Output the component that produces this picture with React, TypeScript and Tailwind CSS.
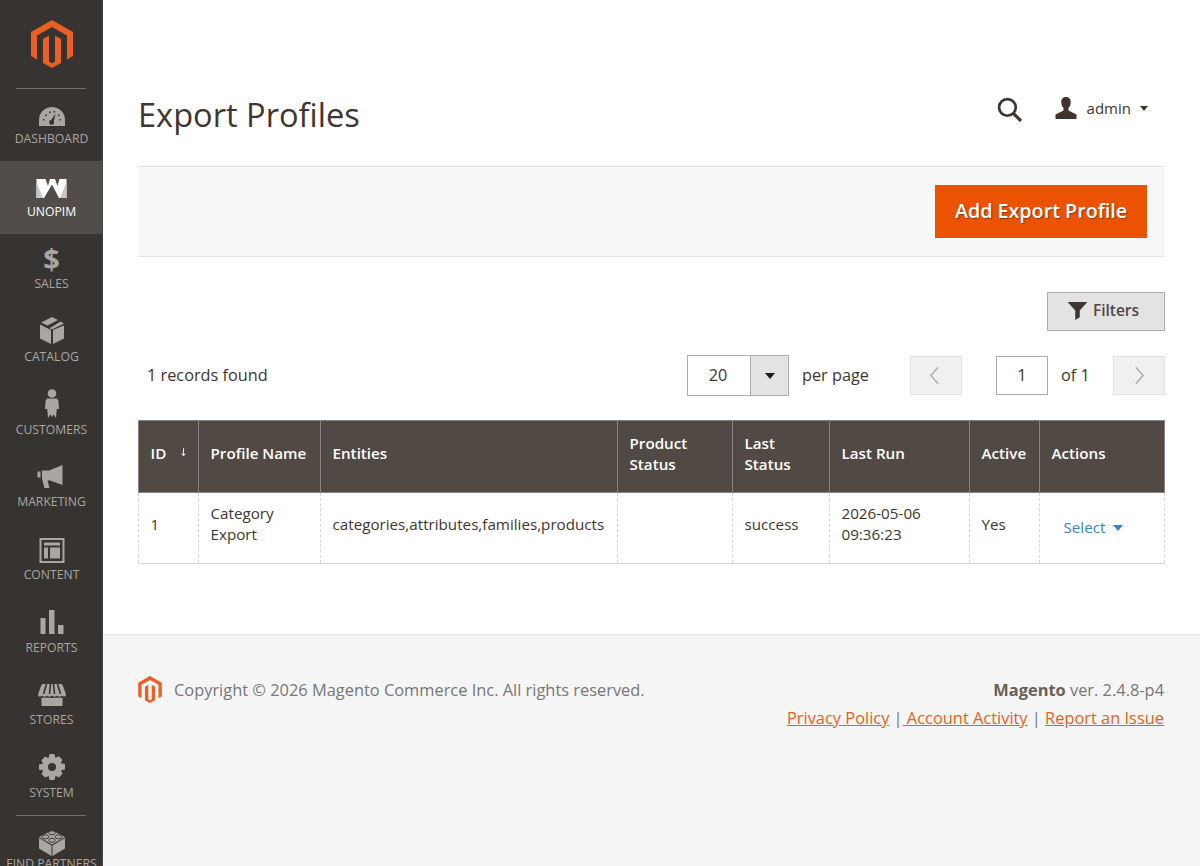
import type { ReactNode } from "react";

const font = { fontFamily: '"Open Sans", "Noto Sans", sans-serif' };

function MagentoLogo({ className }: { className: string }) {
  return (
    <svg viewBox="0 0 42 48" className={className} fill="#eb5f22">
      <path d="M21 0 42 12V36L36 39.5V15.5L21 7 6 15.5V39.5L0 36V12Z" />
      <path d="M21 48 12 43V19L18 15.5V41.5L21 43.5 24 41.5V15.5L30 19V43Z" />
    </svg>
  );
}

const iconFill = "#aaa6a0";

const icons: Record<string, ReactNode> = {
  dashboard: (
    <>
      <path
        fillRule="evenodd"
        fill={iconFill}
        d="M5 31V25a13 13 0 0 1 26 0V31ZM21.5 18.5 17.2 25a2.4 2.4 0 1 0 2.6 1.4Z"
      />
      <path
        fill="#373330"
        d="M9 24h1.6v1.6H9ZM11 19.5h1.6v1.6H11ZM15 16.5h1.6v1.6H15ZM19.5 16h1.6v1.6h-1.6ZM25.5 24h1.6v1.6h-1.6ZM24 19.5h1.6v1.6H24Z"
      />
    </>
  ),
  unopim: (
    <>
      <path
        fill="#ffffff"
        d="M2.500 11H11.500L14 18 16 11H21L23.500 18 25.500 11H32.500V30H25L18 16.500 10 30H2.500Z"
      />
      <path fill="#c9c7c5" d="M2.500 14 9 30H2.500ZM32.500 14 26 30H32.500Z" />
    </>
  ),
  catalog: (
    <>
      <path
        fill={iconFill}
        d="M18 4 24 7 13.500 12.500 7 9.500ZM26.500 8.500 30 10.500 18 16.500 15.500 15.200ZM6 11.500 17 17V31L6 25.500ZM30 12.500V25.500L19 31V17Z"
      />
    </>
  ),
  customers: (
    <>
      <circle cx="18" cy="7.500" r="4.300" fill={iconFill} />
      <path
        fill={iconFill}
        d="M13 12.500h10l1.400 2.200.6 8.300h-2.200l-.8 9-2.400-3.500L18 31l-1.600-2.500-2.400 3.500-.8-9h-2.200l.6-8.300Z"
      />
    </>
  ),
  marketing: (
    <>
      <path
        fill={iconFill}
        d="M28.500 7V27L16 22.500H13.500L15.500 30H10.500L8 20.500V12.500H15ZM3.500 13.500H6.500V19.500H3.500Z"
      />
    </>
  ),
  content: (
    <>
      <path
        fillRule="evenodd"
        fill={iconFill}
        d="M5.500 7H30.500V32H5.500ZM7.500 9V30H28.500V9ZM10 11.500H26V14.500H10ZM10 16.500H14V27.500H10ZM16 16.500H26V27.500H16Z"
      />
    </>
  ),
  reports: (
    <>
      <path fill={iconFill} d="M6.500 14H11.500V30H6.500ZM15 6H20.500V30H15ZM24 21H29.500V30H24Z" />
    </>
  ),
  stores: (
    <>
      <path
        fill={iconFill}
        d="M9.500 8H26.500C28 8 28.500 9 29 10L32 18.500C32 21 29 21 28 19.500 27 21 24 21 23 19.500 22 21 19 21 18 19.500 17 21 14 21 13 19.500 12 21 9 21 8 19.500 7 21 4 21 4 18.500L7 10C7.500 9 8 8 9.500 8ZM7.500 21.500C8 21.800 10 22 13 21.500 15 22 21 22 23 21.500 26 22 28 21.800 28.500 21.500V30H7.500Z"
      />
      <path
        stroke="#373330"
        strokeWidth="1.600"
        d="M12.500 8 9.500 18M16.500 8 15.500 18M19.500 8 20.500 18M23.500 8 26.500 18"
      />
    </>
  ),
  system: (
    <>
      <path
        fillRule="evenodd"
        fill={iconFill}
        d="M15.500 5H20.500L21.300 8.800 24.800 7.300 28.400 10.800 26.700 14.200 31 15V20.500L27 21.300 28.600 24.800 25 28.400 21.500 26.700 20.500 31H15.500L14.700 27 11.200 28.600 7.500 25 9.200 21.500 5 20.500V15.500L9 14.700 7.400 11.200 11 7.500 14.500 9.200ZM18 14A4 4 0 1 0 18 22 4 4 0 0 0 18 14Z"
      />
    </>
  ),
};

const menu = [
  { label: "Dashboard", icon: "dashboard" },
  { label: "Unopim", icon: "unopim", active: true },
  { label: "Sales", icon: "sales" },
  { label: "Catalog", icon: "catalog" },
  { label: "Customers", icon: "customers" },
  { label: "Marketing", icon: "marketing" },
  { label: "Content", icon: "content" },
  { label: "Reports", icon: "reports" },
  { label: "Stores", icon: "stores" },
  { label: "System", icon: "system" },
];

function Sidebar() {
  return (
    <aside className="w-[103px] h-[866px] shrink-0 overflow-hidden bg-[#373330] border-r border-[#4a4542]">
      <div className="h-[87.6px] pt-[20px] pl-[1px] flex justify-center">
        <MagentoLogo className="w-[42px] h-[48px]" />
      </div>
      <div className="h-px mx-[16px] bg-[#736e6a]" />
      {menu.map((item) => (
        <div
          key={item.label}
          className={`h-[72.67px] pt-[6.5px] pl-[1px] flex flex-col items-center ${
            item.active ? "bg-[#524d49]" : ""
          }`}
        >
          {item.icon === "sales" ? (
            <div className="h-[36px] w-[36px] pt-[2px] text-center text-[29px] leading-[34px] font-bold text-[#aaa6a0]">
              $
            </div>
          ) : (
            <svg viewBox="0 0 36 36" className="w-[36px] h-[36px]">
              {icons[item.icon]}
            </svg>
          )}
          <div
            className={`h-[16px] text-[12.2px] leading-[16px] uppercase whitespace-nowrap ${
              item.active ? "text-white" : "text-[#aaa6a0]"
            }`}
          >
            {item.label}
          </div>
        </div>
      ))}
      <div className="h-px mx-[16px] bg-[#736e6a]" />
      <div className="pt-[13px] pl-[1px] flex flex-col items-center">
        <svg viewBox="0 0 28 27" className="w-[28px] h-[27px]">
          <path fill="#aaa6a0" d="M1 9 13.500 16.500V27L1 19.500Z" />
          <path fill="#aaa6a0" d="M27 9 14.500 16.500V27L27 19.500Z" />
          <path fill="#aaa6a0" d="M14 1.500 27 8 14 15.500 1 8Z" />
          <g fill="#aaa6a0" stroke="#373330" strokeWidth="0.900">
            <ellipse cx="14" cy="3.800" rx="3.300" ry="2" />
            <ellipse cx="7.500" cy="7.800" rx="3.300" ry="2" />
            <ellipse cx="20.500" cy="7.800" rx="3.300" ry="2" />
            <ellipse cx="14" cy="11.300" rx="3.300" ry="2" />
          </g>
        </svg>
        <div className="text-[12.2px] leading-[16px] uppercase whitespace-nowrap text-[#aaa6a0]">
          Find Partners
        </div>
      </div>
    </aside>
  );
}

const th =
  "border border-[#8a837f] bg-[#514943] px-[11.5px] pb-[6px] text-left align-middle text-[15.2px] leading-[21px] font-semibold text-white";
const td =
  "border-l border-r border-dashed border-[#d6d6d6] px-[11.5px] pb-[8px] align-middle text-[15.2px] leading-[21px] text-[#41362f]";

function ProfilesTable() {
  return (
    <table className="w-[1026px] h-[143px] table-fixed border-collapse">
      <colgroup>
        <col className="w-[60px]" />
        <col className="w-[122px]" />
        <col className="w-[297px]" />
        <col className="w-[115px]" />
        <col className="w-[97px]" />
        <col className="w-[140px]" />
        <col className="w-[70px]" />
        <col className="w-[125px]" />
      </colgroup>
      <thead>
        <tr className="h-[72px]">
          <th className={th}>
            <div className="flex items-center justify-between">
              ID
              <svg viewBox="0 0 8 10" className="w-[7px] h-[9px] mb-[3px]">
                <path d="M4 0V8M2 6 4 9 6 6" fill="none" stroke="#ffffff" strokeWidth="1" />
              </svg>
            </div>
          </th>
          <th className={th}>Profile Name</th>
          <th className={th}>Entities</th>
          <th className={th}>Product Status</th>
          <th className={th}>Last Status</th>
          <th className={th}>Last Run</th>
          <th className={th}>Active</th>
          <th className={th}>Actions</th>
        </tr>
      </thead>
      <tbody>
        <tr className="h-[71px] border-b border-[#d6d6d6]">
          <td className={td}>1</td>
          <td className={td}>Category Export</td>
          <td className={`${td} whitespace-nowrap`}>categories,attributes,families,products</td>
          <td className={td}></td>
          <td className={td}>success</td>
          <td className={td}>
            2026-05-06
            <br />
            09:36:23
          </td>
          <td className={td}>Yes</td>
          <td className={td}>
            <div className="flex items-center pl-[12px] pt-[7px] text-[#3a83c8]">
              Select
              <span className="ml-[8px] w-0 h-0 border-x-[5px] border-x-transparent border-t-[6px] border-t-[#3a83c8]" />
            </div>
          </td>
        </tr>
      </tbody>
    </table>
  );
}

function PagerButton({ dir }: { dir: "prev" | "next" }) {
  return (
    <div className="w-[52px] h-[39px] flex items-center justify-center bg-[#f0f0f0] border border-[#e3e3e3]">
      <svg viewBox="0 0 12 20" className={`w-[11px] h-[19px] ${dir === "prev" ? "mr-[3px]" : ""}`}>
        <path
          d={dir === "prev" ? "M10 1 2 10 10 19" : "M2 1 10 10 2 19"}
          fill="none"
          stroke="#b0aeab"
          strokeWidth="1.600"
        />
      </svg>
    </div>
  );
}

export default function App() {
  return (
    <div className="flex w-[1200px] h-[866px] overflow-hidden bg-white" style={font}>
      <Sidebar />
      <main className="flex-1 flex flex-col min-w-0">
        <div className="px-[35px]">
          <header className="h-[166px] pt-[94px] flex items-start justify-between">
            <h1 className="text-[32.6px] leading-[42px] text-[#41362f]">Export Profiles</h1>
            <div className="flex items-center pt-[3px] pr-[17px]">
              <svg viewBox="0 0 24 24" className="w-[25px] h-[25px]">
                <circle cx="10" cy="10" r="8" fill="none" stroke="#41362f" strokeWidth="2.600" />
                <path d="M15.500 15.500 23 23" stroke="#41362f" strokeWidth="3" />
              </svg>
              <svg viewBox="0 0 24 22" className="w-[24px] h-[22px] ml-[32px] mb-[3px]">
                <path
                  fill="#41362f"
                  d="M12 0C8.500 0 7 2.500 7.300 6c.2 2 1 3.800 2.200 5v2.500L1.500 17.500V22h21v-4.500L14.500 13.500V11c1.200-1.200 2-3 2.200-5C17 2.500 15.500 0 12 0Z"
                />
              </svg>
              <span className="ml-[9px] text-[15px] leading-[20px] text-[#41362f] mb-[3px]">admin</span>
              <span className="ml-[9px] mb-[2px] w-0 h-0 border-x-[4.500px] border-x-transparent border-t-[5px] border-t-[#41362f]" />
            </div>
          </header>

          <div className="h-[91px] flex items-center justify-end pr-[18px] bg-[#f8f8f8] border-y border-[#e3e3e3]">
            <button className="w-[212px] h-[53px] pb-[1px] bg-[#eb5202] text-white text-[19.7px] font-semibold [text-shadow:1px_1px_1px_rgba(0,0,0,0.35)]">
              Add Export Profile
            </button>
          </div>

          <div className="mt-[35px] flex justify-end">
            <button className="w-[118px] h-[39px] pr-[6px] pb-[1px] flex items-center justify-center gap-[5px] bg-[#e3e3e3] border border-[#adadad] text-[15.5px] font-semibold text-[#514943]">
              <svg viewBox="0 0 22 20" className="w-[21px] h-[18px]">
                <path fill="#41362f" d="M0 0H22L13.500 9.500V17L8.500 20V9.500Z" />
              </svg>
              Filters
            </button>
          </div>

          <div className="mt-[24px] h-[41px] flex items-center text-[16.3px] text-[#41362f]">
            <div className="w-[549px] pl-[9px] pb-[1px]">1 records found</div>
            <div className="w-[102px] h-[41px] flex border border-[#adadad]">
              <div className="flex-1 flex items-center justify-center bg-white pr-[2px]">20</div>
              <div className="w-[38px] flex items-center justify-center bg-[#e3e3e3] border-l border-[#adadad]">
                <span className="w-0 h-0 border-x-[5px] border-x-transparent border-t-[6px] border-t-[#1f1a17]" />
              </div>
            </div>
            <div className="w-[108px] pl-[13px]">per page</div>
            <div className="ml-[13px]">
              <PagerButton dir="prev" />
            </div>
            <div className="ml-[34px] w-[52px] h-[39px] flex items-center justify-center bg-white border border-[#adadad]">
              1
            </div>
            <div className="w-[65px] pl-[13px]">of 1</div>
            <PagerButton dir="next" />
          </div>

          <div className="mt-[24px]">
            <ProfilesTable />
          </div>
        </div>

        <footer className="mt-[70px] flex-1 bg-[#f5f5f5] border-t border-[#e3e3e3] pl-[35px] pr-[36px] pt-[41px] flex justify-between text-[16.4px]">
          <div className="flex items-start">
            <MagentoLogo className="w-[24px] h-[27px]" />
            <span className="ml-[12px] leading-[27px] text-[#777777]">
              Copyright © 2026 Magento Commerce Inc. All rights reserved.
            </span>
          </div>
          <div className="text-right">
            <div className="leading-[27px] text-[#777777]">
              <span className="font-bold text-[#676056]">Magento</span> ver. 2.4.8-p4
            </div>
            <div className="mt-[1px] leading-[27px] text-[#777777]">
              <span className="text-[#eb5f22] underline">Privacy Policy</span>
              {" |"}
              <span className="text-[#eb5f22] underline"> Account Activity</span>
              {" | "}
              <span className="text-[#eb5f22] underline">Report an Issue</span>
            </div>
          </div>
        </footer>
      </main>
    </div>
  );
}
